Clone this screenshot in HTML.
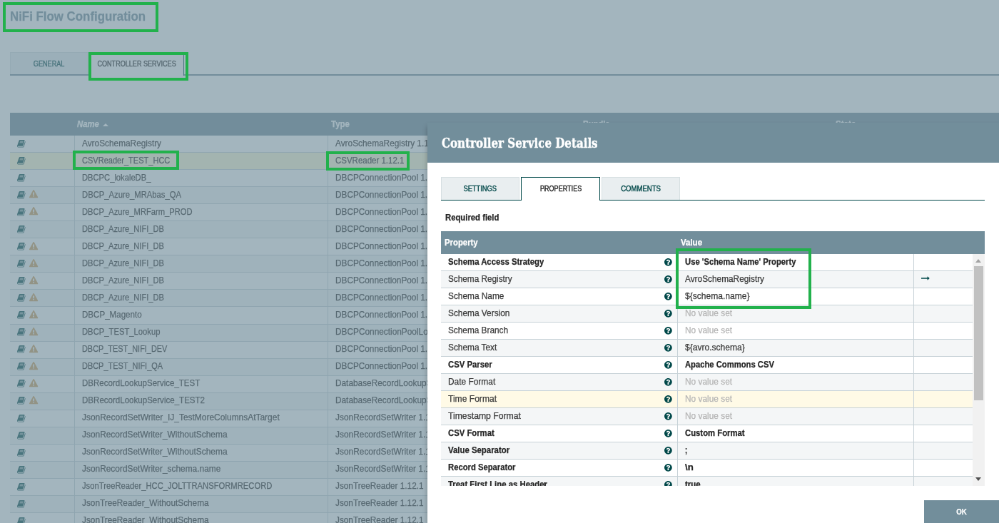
<!DOCTYPE html>
<html><head><meta charset="utf-8"><title>NiFi Flow Configuration</title><style>
html,body{margin:0;padding:0;}
body{width:999px;height:523px;overflow:hidden;background:#fff;font-family:"Liberation Sans",sans-serif;}
#stage{position:absolute;left:0;top:0;width:1400px;height:733px;transform:scale(0.713571);transform-origin:0 0;overflow:hidden;background:#fff;will-change:transform;color:#262626;font-size:12.5px;}
#stage *{box-sizing:border-box;}
.abs{position:absolute;}
.t{display:inline-block;white-space:nowrap;-webkit-text-stroke:0.25px currentColor;}
#title{left:14px;top:13.5px;font-size:18.5px;font-weight:bold;color:#728e9b;white-space:nowrap;line-height:1;}
.tabs{position:absolute;}
.tabs.bgt{height:33.2px;border-bottom:2px solid #728e9b;}
.tabs.dlt{height:32.6px;border-bottom:1px solid #004849;}
.tab{position:absolute;top:0;line-height:31px;text-align:center;font-size:10.3px;font-weight:400;white-space:nowrap;}
.bgt .tab{height:31.2px;}
.dlt .tab{height:31.6px;line-height:32.2px;}
.tab .t{-webkit-text-stroke-width:0.4px;}
.tab.un{background:#e9eef0;color:#004849;border:1px solid #d6dfe2;border-bottom:none;}
.tab.sel{background:#fff;color:#262626;border:1px solid #004849;border-bottom:none;}
.bgt .tab.sel{height:33.2px;}
.dlt .tab.sel{height:32.6px;}
.grid{position:absolute;overflow:hidden;}
.ghead{position:absolute;left:0;top:0;right:0;height:32px;background:#728e9b;color:#fff;font-weight:bold;line-height:32px;}
.ghead .hc{position:absolute;top:0;white-space:nowrap;}
.row{position:absolute;left:0;right:0;height:24px;line-height:22.6px;border-bottom:1px solid #c7d2d7;white-space:nowrap;background:#fff;}
.row.even{background:#f4f6f7;}
.row.selrow{background:#fffcd8;}
.row.hov{background:#fffae6;}
.cell{position:absolute;top:0;bottom:0;overflow:hidden;border-right:1px solid #c7d2d7;}
.bgrow .t{position:relative;top:-0.5px;}
svg.ic{position:absolute;display:block;overflow:visible;}
svg.book path{fill:#004849;}
svg.warn path{fill:#cf9f5d;}
svg.q path{fill:#004849;}
svg.arr path{fill:#004849;}
#glass{left:0;top:0;width:1400px;height:733px;background:rgba(114,142,155,0.65);}
#dialog{left:598.5px;top:171.7px;width:803.5px;height:600px;background:#fff;box-shadow:0 5px 7px rgba(0,0,0,.28);}
#dhead{left:0;top:0;right:0;height:56px;background:#728e9b;}
#dtitle{left:20px;top:19.5px;font-family:"DejaVu Serif","Liberation Serif",serif;font-weight:bold;font-size:19px;color:#fff;white-space:nowrap;line-height:1;}
.b{font-weight:bold;color:#262626;}
#dialog .row{color:#3a3a3a;}
.unset{color:#b4b4b4;}
.green{position:absolute;border:4.4px solid #22b14c;}
#ok{background:#728e9b;color:#fff;text-align:center;font-size:11.3px;font-weight:700;line-height:32px;height:40px;}
</style></head><body><div id="stage">
<div id="title" class="abs"><span class="t k-title" style="transform:scaleX(0.9114);transform-origin:0 50%;">NiFi Flow Configuration</span></div>
<div class="tabs bgt" style="left:13.7px;top:72.9px;width:1500px;"><div class="tab un" style="left:0;width:110.5px;"><span class="t k-tab" style="transform:scaleX(0.8845);transform-origin:50% 50%;">GENERAL</span></div><div class="tab sel" style="left:112.2px;width:131.9px;"><span class="t k-tab" style="transform:scaleX(0.8811);transform-origin:50% 50%;">CONTROLLER SERVICES</span></div></div>
<div class="grid" style="left:14px;top:157.6px;width:1391px;height:580.4px;">
<div class="ghead" style="height:32.5px;"><div class="hc" style="left:93.8px;font-style:italic;"><span class="t k-headi" style="transform:scaleX(0.9058);transform-origin:0 50%;">Name</span></div><div class="hc" style="left:130.4px;top:15.2px;width:0;height:0;border-left:4.2px solid transparent;border-right:4.2px solid transparent;border-bottom:4.6px solid #fff;"></div><div class="hc" style="left:450px;"><span class="t k-head" style="transform:scaleX(0.9150);transform-origin:0 50%;">Type</span></div><div class="hc" style="left:803px;"><span class="t k-head" style="transform:scaleX(0.8861);transform-origin:0 50%;">Bundle</span></div><div class="hc" style="left:1157px;"><span class="t k-head" style="transform:scaleX(0.9293);transform-origin:0 50%;">State</span></div></div>
<div class="row bgrow" style="top:32.50px;height:24.04px;"><div class="cell" style="left:0;width:91.2px;"><svg class="ic book" style="width:11.61px;height:12.50px;left:9.5px;top:4.8px;" viewBox="0 -1536 1664 1792"><path transform="scale(1,-1)" d="M1639 1058C1624 1078 1603 1092 1580 1101C1581 1083 1581 1063 1575 1044L1275 57C1264 21 1221 0 1184 0H261C206 0 137 12 117 70C109 92 110 101 118 113C127 125 143 128 156 128H1025C1152 128 1178 162 1225 316L1499 1222C1513 1269 1507 1316 1481 1352C1456 1387 1414 1408 1367 1408H606C589 1408 572 1403 555 1399L556 1402C429 1438 421 1301 379 1239C363 1216 339 1196 335 1177C332 1159 342 1142 340 1125C334 1072 294 977 270 944C255 924 233 914 226 891C220 875 230 852 228 831C223 784 188 695 161 649C151 631 132 617 127 598C122 581 132 559 127 540C116 488 82 407 52 357C36 330 15 313 11 289C9 277 18 264 17 248C16 224 12 204 10 184C-4 146 -4 102 12 57C49 -47 158 -128 260 -128H1183C1269 -128 1357 -62 1382 23L1657 929C1671 975 1664 1022 1639 1058ZM575 1056 596 1120C602 1138 621 1152 638 1152H1246C1264 1152 1274 1138 1268 1120L1247 1056C1241 1038 1222 1024 1205 1024H597C579 1024 569 1038 575 1056ZM492 800 513 864C519 882 538 896 555 896H1163C1181 896 1191 882 1185 864L1164 800C1158 782 1139 768 1122 768H514C496 768 486 782 492 800Z"/></svg></div><div class="cell" style="left:91.2px;width:354.8px;padding-left:10px;"><span class="t k-row" style="transform:scaleX(0.9477);transform-origin:0 50%;">AvroSchemaRegistry</span></div><div class="cell" style="left:446px;width:353px;padding-left:10px;"><span class="t k-row" style="transform:scaleX(0.9480);transform-origin:0 50%;">AvroSchemaRegistry 1.12.1</span></div><div class="cell" style="left:799px;width:354px;"></div></div>
<div class="row bgrow even selrow" style="top:56.54px;height:24.04px;"><div class="cell" style="left:0;width:91.2px;"><svg class="ic book" style="width:11.61px;height:12.50px;left:9.5px;top:4.8px;" viewBox="0 -1536 1664 1792"><path transform="scale(1,-1)" d="M1639 1058C1624 1078 1603 1092 1580 1101C1581 1083 1581 1063 1575 1044L1275 57C1264 21 1221 0 1184 0H261C206 0 137 12 117 70C109 92 110 101 118 113C127 125 143 128 156 128H1025C1152 128 1178 162 1225 316L1499 1222C1513 1269 1507 1316 1481 1352C1456 1387 1414 1408 1367 1408H606C589 1408 572 1403 555 1399L556 1402C429 1438 421 1301 379 1239C363 1216 339 1196 335 1177C332 1159 342 1142 340 1125C334 1072 294 977 270 944C255 924 233 914 226 891C220 875 230 852 228 831C223 784 188 695 161 649C151 631 132 617 127 598C122 581 132 559 127 540C116 488 82 407 52 357C36 330 15 313 11 289C9 277 18 264 17 248C16 224 12 204 10 184C-4 146 -4 102 12 57C49 -47 158 -128 260 -128H1183C1269 -128 1357 -62 1382 23L1657 929C1671 975 1664 1022 1639 1058ZM575 1056 596 1120C602 1138 621 1152 638 1152H1246C1264 1152 1274 1138 1268 1120L1247 1056C1241 1038 1222 1024 1205 1024H597C579 1024 569 1038 575 1056ZM492 800 513 864C519 882 538 896 555 896H1163C1181 896 1191 882 1185 864L1164 800C1158 782 1139 768 1122 768H514C496 768 486 782 492 800Z"/></svg></div><div class="cell" style="left:91.2px;width:354.8px;padding-left:10px;"><span class="t k-row" style="transform:scaleX(0.8833);transform-origin:0 50%;">CSVReader_TEST_HCC</span></div><div class="cell" style="left:446px;width:353px;padding-left:10px;"><span class="t k-row" style="transform:scaleX(0.9182);transform-origin:0 50%;">CSVReader 1.12.1</span></div><div class="cell" style="left:799px;width:354px;"></div></div>
<div class="row bgrow" style="top:80.58px;height:24.04px;"><div class="cell" style="left:0;width:91.2px;"><svg class="ic book" style="width:11.61px;height:12.50px;left:9.5px;top:4.8px;" viewBox="0 -1536 1664 1792"><path transform="scale(1,-1)" d="M1639 1058C1624 1078 1603 1092 1580 1101C1581 1083 1581 1063 1575 1044L1275 57C1264 21 1221 0 1184 0H261C206 0 137 12 117 70C109 92 110 101 118 113C127 125 143 128 156 128H1025C1152 128 1178 162 1225 316L1499 1222C1513 1269 1507 1316 1481 1352C1456 1387 1414 1408 1367 1408H606C589 1408 572 1403 555 1399L556 1402C429 1438 421 1301 379 1239C363 1216 339 1196 335 1177C332 1159 342 1142 340 1125C334 1072 294 977 270 944C255 924 233 914 226 891C220 875 230 852 228 831C223 784 188 695 161 649C151 631 132 617 127 598C122 581 132 559 127 540C116 488 82 407 52 357C36 330 15 313 11 289C9 277 18 264 17 248C16 224 12 204 10 184C-4 146 -4 102 12 57C49 -47 158 -128 260 -128H1183C1269 -128 1357 -62 1382 23L1657 929C1671 975 1664 1022 1639 1058ZM575 1056 596 1120C602 1138 621 1152 638 1152H1246C1264 1152 1274 1138 1268 1120L1247 1056C1241 1038 1222 1024 1205 1024H597C579 1024 569 1038 575 1056ZM492 800 513 864C519 882 538 896 555 896H1163C1181 896 1191 882 1185 864L1164 800C1158 782 1139 768 1122 768H514C496 768 486 782 492 800Z"/></svg></div><div class="cell" style="left:91.2px;width:354.8px;padding-left:10px;"><span class="t k-row" style="transform:scaleX(0.8950);transform-origin:0 50%;">DBCPC_lokaleDB_</span></div><div class="cell" style="left:446px;width:353px;padding-left:10px;"><span class="t k-row" style="transform:scaleX(0.9432);transform-origin:0 50%;">DBCPConnectionPool 1.12.1</span></div><div class="cell" style="left:799px;width:354px;"></div></div>
<div class="row bgrow even" style="top:104.62px;height:24.04px;"><div class="cell" style="left:0;width:91.2px;"><svg class="ic book" style="width:11.61px;height:12.50px;left:9.5px;top:4.8px;" viewBox="0 -1536 1664 1792"><path transform="scale(1,-1)" d="M1639 1058C1624 1078 1603 1092 1580 1101C1581 1083 1581 1063 1575 1044L1275 57C1264 21 1221 0 1184 0H261C206 0 137 12 117 70C109 92 110 101 118 113C127 125 143 128 156 128H1025C1152 128 1178 162 1225 316L1499 1222C1513 1269 1507 1316 1481 1352C1456 1387 1414 1408 1367 1408H606C589 1408 572 1403 555 1399L556 1402C429 1438 421 1301 379 1239C363 1216 339 1196 335 1177C332 1159 342 1142 340 1125C334 1072 294 977 270 944C255 924 233 914 226 891C220 875 230 852 228 831C223 784 188 695 161 649C151 631 132 617 127 598C122 581 132 559 127 540C116 488 82 407 52 357C36 330 15 313 11 289C9 277 18 264 17 248C16 224 12 204 10 184C-4 146 -4 102 12 57C49 -47 158 -128 260 -128H1183C1269 -128 1357 -62 1382 23L1657 929C1671 975 1664 1022 1639 1058ZM575 1056 596 1120C602 1138 621 1152 638 1152H1246C1264 1152 1274 1138 1268 1120L1247 1056C1241 1038 1222 1024 1205 1024H597C579 1024 569 1038 575 1056ZM492 800 513 864C519 882 538 896 555 896H1163C1181 896 1191 882 1185 864L1164 800C1158 782 1139 768 1122 768H514C496 768 486 782 492 800Z"/></svg><svg class="ic warn" style="width:12.20px;height:12.20px;left:26.799999999999997px;top:4.2px;" viewBox="0 -1536 1792 1792"><path transform="scale(1,-1)" d="M1024 161C1024 143 1010 128 992 128H800C782 128 768 143 768 161V351C768 369 782 384 800 384H992C1010 384 1024 369 1024 351V161ZM1022 535C1021 522 1006 512 988 512H803C784 512 769 522 769 535L752 992C752 998 755 1008 762 1013C768 1018 777 1024 786 1024H1006C1015 1024 1024 1018 1030 1013C1037 1008 1040 1000 1040 994ZM1008 1469C986 1510 943 1536 896 1536C849 1536 806 1510 784 1469L16 61C-6 22 -5 -26 18 -65C41 -104 83 -128 128 -128H1664C1709 -128 1751 -104 1774 -65C1797 -26 1798 22 1776 61Z"/></svg></div><div class="cell" style="left:91.2px;width:354.8px;padding-left:10px;"><span class="t k-row" style="transform:scaleX(0.9015);transform-origin:0 50%;">DBCP_Azure_MRAbas_QA</span></div><div class="cell" style="left:446px;width:353px;padding-left:10px;"><span class="t k-row" style="transform:scaleX(0.9432);transform-origin:0 50%;">DBCPConnectionPool 1.12.1</span></div><div class="cell" style="left:799px;width:354px;"></div></div>
<div class="row bgrow" style="top:128.66px;height:24.04px;"><div class="cell" style="left:0;width:91.2px;"><svg class="ic book" style="width:11.61px;height:12.50px;left:9.5px;top:4.8px;" viewBox="0 -1536 1664 1792"><path transform="scale(1,-1)" d="M1639 1058C1624 1078 1603 1092 1580 1101C1581 1083 1581 1063 1575 1044L1275 57C1264 21 1221 0 1184 0H261C206 0 137 12 117 70C109 92 110 101 118 113C127 125 143 128 156 128H1025C1152 128 1178 162 1225 316L1499 1222C1513 1269 1507 1316 1481 1352C1456 1387 1414 1408 1367 1408H606C589 1408 572 1403 555 1399L556 1402C429 1438 421 1301 379 1239C363 1216 339 1196 335 1177C332 1159 342 1142 340 1125C334 1072 294 977 270 944C255 924 233 914 226 891C220 875 230 852 228 831C223 784 188 695 161 649C151 631 132 617 127 598C122 581 132 559 127 540C116 488 82 407 52 357C36 330 15 313 11 289C9 277 18 264 17 248C16 224 12 204 10 184C-4 146 -4 102 12 57C49 -47 158 -128 260 -128H1183C1269 -128 1357 -62 1382 23L1657 929C1671 975 1664 1022 1639 1058ZM575 1056 596 1120C602 1138 621 1152 638 1152H1246C1264 1152 1274 1138 1268 1120L1247 1056C1241 1038 1222 1024 1205 1024H597C579 1024 569 1038 575 1056ZM492 800 513 864C519 882 538 896 555 896H1163C1181 896 1191 882 1185 864L1164 800C1158 782 1139 768 1122 768H514C496 768 486 782 492 800Z"/></svg><svg class="ic warn" style="width:12.20px;height:12.20px;left:26.799999999999997px;top:4.2px;" viewBox="0 -1536 1792 1792"><path transform="scale(1,-1)" d="M1024 161C1024 143 1010 128 992 128H800C782 128 768 143 768 161V351C768 369 782 384 800 384H992C1010 384 1024 369 1024 351V161ZM1022 535C1021 522 1006 512 988 512H803C784 512 769 522 769 535L752 992C752 998 755 1008 762 1013C768 1018 777 1024 786 1024H1006C1015 1024 1024 1018 1030 1013C1037 1008 1040 1000 1040 994ZM1008 1469C986 1510 943 1536 896 1536C849 1536 806 1510 784 1469L16 61C-6 22 -5 -26 18 -65C41 -104 83 -128 128 -128H1664C1709 -128 1751 -104 1774 -65C1797 -26 1798 22 1776 61Z"/></svg></div><div class="cell" style="left:91.2px;width:354.8px;padding-left:10px;"><span class="t k-row" style="transform:scaleX(0.8934);transform-origin:0 50%;">DBCP_Azure_MRFarm_PROD</span></div><div class="cell" style="left:446px;width:353px;padding-left:10px;"><span class="t k-row" style="transform:scaleX(0.9432);transform-origin:0 50%;">DBCPConnectionPool 1.12.1</span></div><div class="cell" style="left:799px;width:354px;"></div></div>
<div class="row bgrow even" style="top:152.70px;height:24.04px;"><div class="cell" style="left:0;width:91.2px;"><svg class="ic book" style="width:11.61px;height:12.50px;left:9.5px;top:4.8px;" viewBox="0 -1536 1664 1792"><path transform="scale(1,-1)" d="M1639 1058C1624 1078 1603 1092 1580 1101C1581 1083 1581 1063 1575 1044L1275 57C1264 21 1221 0 1184 0H261C206 0 137 12 117 70C109 92 110 101 118 113C127 125 143 128 156 128H1025C1152 128 1178 162 1225 316L1499 1222C1513 1269 1507 1316 1481 1352C1456 1387 1414 1408 1367 1408H606C589 1408 572 1403 555 1399L556 1402C429 1438 421 1301 379 1239C363 1216 339 1196 335 1177C332 1159 342 1142 340 1125C334 1072 294 977 270 944C255 924 233 914 226 891C220 875 230 852 228 831C223 784 188 695 161 649C151 631 132 617 127 598C122 581 132 559 127 540C116 488 82 407 52 357C36 330 15 313 11 289C9 277 18 264 17 248C16 224 12 204 10 184C-4 146 -4 102 12 57C49 -47 158 -128 260 -128H1183C1269 -128 1357 -62 1382 23L1657 929C1671 975 1664 1022 1639 1058ZM575 1056 596 1120C602 1138 621 1152 638 1152H1246C1264 1152 1274 1138 1268 1120L1247 1056C1241 1038 1222 1024 1205 1024H597C579 1024 569 1038 575 1056ZM492 800 513 864C519 882 538 896 555 896H1163C1181 896 1191 882 1185 864L1164 800C1158 782 1139 768 1122 768H514C496 768 486 782 492 800Z"/></svg></div><div class="cell" style="left:91.2px;width:354.8px;padding-left:10px;"><span class="t k-row" style="transform:scaleX(0.8890);transform-origin:0 50%;">DBCP_Azure_NIFI_DB</span></div><div class="cell" style="left:446px;width:353px;padding-left:10px;"><span class="t k-row" style="transform:scaleX(0.9432);transform-origin:0 50%;">DBCPConnectionPool 1.12.1</span></div><div class="cell" style="left:799px;width:354px;"></div></div>
<div class="row bgrow" style="top:176.74px;height:24.04px;"><div class="cell" style="left:0;width:91.2px;"><svg class="ic book" style="width:11.61px;height:12.50px;left:9.5px;top:4.8px;" viewBox="0 -1536 1664 1792"><path transform="scale(1,-1)" d="M1639 1058C1624 1078 1603 1092 1580 1101C1581 1083 1581 1063 1575 1044L1275 57C1264 21 1221 0 1184 0H261C206 0 137 12 117 70C109 92 110 101 118 113C127 125 143 128 156 128H1025C1152 128 1178 162 1225 316L1499 1222C1513 1269 1507 1316 1481 1352C1456 1387 1414 1408 1367 1408H606C589 1408 572 1403 555 1399L556 1402C429 1438 421 1301 379 1239C363 1216 339 1196 335 1177C332 1159 342 1142 340 1125C334 1072 294 977 270 944C255 924 233 914 226 891C220 875 230 852 228 831C223 784 188 695 161 649C151 631 132 617 127 598C122 581 132 559 127 540C116 488 82 407 52 357C36 330 15 313 11 289C9 277 18 264 17 248C16 224 12 204 10 184C-4 146 -4 102 12 57C49 -47 158 -128 260 -128H1183C1269 -128 1357 -62 1382 23L1657 929C1671 975 1664 1022 1639 1058ZM575 1056 596 1120C602 1138 621 1152 638 1152H1246C1264 1152 1274 1138 1268 1120L1247 1056C1241 1038 1222 1024 1205 1024H597C579 1024 569 1038 575 1056ZM492 800 513 864C519 882 538 896 555 896H1163C1181 896 1191 882 1185 864L1164 800C1158 782 1139 768 1122 768H514C496 768 486 782 492 800Z"/></svg><svg class="ic warn" style="width:12.20px;height:12.20px;left:26.799999999999997px;top:4.2px;" viewBox="0 -1536 1792 1792"><path transform="scale(1,-1)" d="M1024 161C1024 143 1010 128 992 128H800C782 128 768 143 768 161V351C768 369 782 384 800 384H992C1010 384 1024 369 1024 351V161ZM1022 535C1021 522 1006 512 988 512H803C784 512 769 522 769 535L752 992C752 998 755 1008 762 1013C768 1018 777 1024 786 1024H1006C1015 1024 1024 1018 1030 1013C1037 1008 1040 1000 1040 994ZM1008 1469C986 1510 943 1536 896 1536C849 1536 806 1510 784 1469L16 61C-6 22 -5 -26 18 -65C41 -104 83 -128 128 -128H1664C1709 -128 1751 -104 1774 -65C1797 -26 1798 22 1776 61Z"/></svg></div><div class="cell" style="left:91.2px;width:354.8px;padding-left:10px;"><span class="t k-row" style="transform:scaleX(0.8890);transform-origin:0 50%;">DBCP_Azure_NIFI_DB</span></div><div class="cell" style="left:446px;width:353px;padding-left:10px;"><span class="t k-row" style="transform:scaleX(0.9432);transform-origin:0 50%;">DBCPConnectionPool 1.12.1</span></div><div class="cell" style="left:799px;width:354px;"></div></div>
<div class="row bgrow even" style="top:200.78px;height:24.04px;"><div class="cell" style="left:0;width:91.2px;"><svg class="ic book" style="width:11.61px;height:12.50px;left:9.5px;top:4.8px;" viewBox="0 -1536 1664 1792"><path transform="scale(1,-1)" d="M1639 1058C1624 1078 1603 1092 1580 1101C1581 1083 1581 1063 1575 1044L1275 57C1264 21 1221 0 1184 0H261C206 0 137 12 117 70C109 92 110 101 118 113C127 125 143 128 156 128H1025C1152 128 1178 162 1225 316L1499 1222C1513 1269 1507 1316 1481 1352C1456 1387 1414 1408 1367 1408H606C589 1408 572 1403 555 1399L556 1402C429 1438 421 1301 379 1239C363 1216 339 1196 335 1177C332 1159 342 1142 340 1125C334 1072 294 977 270 944C255 924 233 914 226 891C220 875 230 852 228 831C223 784 188 695 161 649C151 631 132 617 127 598C122 581 132 559 127 540C116 488 82 407 52 357C36 330 15 313 11 289C9 277 18 264 17 248C16 224 12 204 10 184C-4 146 -4 102 12 57C49 -47 158 -128 260 -128H1183C1269 -128 1357 -62 1382 23L1657 929C1671 975 1664 1022 1639 1058ZM575 1056 596 1120C602 1138 621 1152 638 1152H1246C1264 1152 1274 1138 1268 1120L1247 1056C1241 1038 1222 1024 1205 1024H597C579 1024 569 1038 575 1056ZM492 800 513 864C519 882 538 896 555 896H1163C1181 896 1191 882 1185 864L1164 800C1158 782 1139 768 1122 768H514C496 768 486 782 492 800Z"/></svg><svg class="ic warn" style="width:12.20px;height:12.20px;left:26.799999999999997px;top:4.2px;" viewBox="0 -1536 1792 1792"><path transform="scale(1,-1)" d="M1024 161C1024 143 1010 128 992 128H800C782 128 768 143 768 161V351C768 369 782 384 800 384H992C1010 384 1024 369 1024 351V161ZM1022 535C1021 522 1006 512 988 512H803C784 512 769 522 769 535L752 992C752 998 755 1008 762 1013C768 1018 777 1024 786 1024H1006C1015 1024 1024 1018 1030 1013C1037 1008 1040 1000 1040 994ZM1008 1469C986 1510 943 1536 896 1536C849 1536 806 1510 784 1469L16 61C-6 22 -5 -26 18 -65C41 -104 83 -128 128 -128H1664C1709 -128 1751 -104 1774 -65C1797 -26 1798 22 1776 61Z"/></svg></div><div class="cell" style="left:91.2px;width:354.8px;padding-left:10px;"><span class="t k-row" style="transform:scaleX(0.8890);transform-origin:0 50%;">DBCP_Azure_NIFI_DB</span></div><div class="cell" style="left:446px;width:353px;padding-left:10px;"><span class="t k-row" style="transform:scaleX(0.9432);transform-origin:0 50%;">DBCPConnectionPool 1.12.1</span></div><div class="cell" style="left:799px;width:354px;"></div></div>
<div class="row bgrow" style="top:224.82px;height:24.04px;"><div class="cell" style="left:0;width:91.2px;"><svg class="ic book" style="width:11.61px;height:12.50px;left:9.5px;top:4.8px;" viewBox="0 -1536 1664 1792"><path transform="scale(1,-1)" d="M1639 1058C1624 1078 1603 1092 1580 1101C1581 1083 1581 1063 1575 1044L1275 57C1264 21 1221 0 1184 0H261C206 0 137 12 117 70C109 92 110 101 118 113C127 125 143 128 156 128H1025C1152 128 1178 162 1225 316L1499 1222C1513 1269 1507 1316 1481 1352C1456 1387 1414 1408 1367 1408H606C589 1408 572 1403 555 1399L556 1402C429 1438 421 1301 379 1239C363 1216 339 1196 335 1177C332 1159 342 1142 340 1125C334 1072 294 977 270 944C255 924 233 914 226 891C220 875 230 852 228 831C223 784 188 695 161 649C151 631 132 617 127 598C122 581 132 559 127 540C116 488 82 407 52 357C36 330 15 313 11 289C9 277 18 264 17 248C16 224 12 204 10 184C-4 146 -4 102 12 57C49 -47 158 -128 260 -128H1183C1269 -128 1357 -62 1382 23L1657 929C1671 975 1664 1022 1639 1058ZM575 1056 596 1120C602 1138 621 1152 638 1152H1246C1264 1152 1274 1138 1268 1120L1247 1056C1241 1038 1222 1024 1205 1024H597C579 1024 569 1038 575 1056ZM492 800 513 864C519 882 538 896 555 896H1163C1181 896 1191 882 1185 864L1164 800C1158 782 1139 768 1122 768H514C496 768 486 782 492 800Z"/></svg><svg class="ic warn" style="width:12.20px;height:12.20px;left:26.799999999999997px;top:4.2px;" viewBox="0 -1536 1792 1792"><path transform="scale(1,-1)" d="M1024 161C1024 143 1010 128 992 128H800C782 128 768 143 768 161V351C768 369 782 384 800 384H992C1010 384 1024 369 1024 351V161ZM1022 535C1021 522 1006 512 988 512H803C784 512 769 522 769 535L752 992C752 998 755 1008 762 1013C768 1018 777 1024 786 1024H1006C1015 1024 1024 1018 1030 1013C1037 1008 1040 1000 1040 994ZM1008 1469C986 1510 943 1536 896 1536C849 1536 806 1510 784 1469L16 61C-6 22 -5 -26 18 -65C41 -104 83 -128 128 -128H1664C1709 -128 1751 -104 1774 -65C1797 -26 1798 22 1776 61Z"/></svg></div><div class="cell" style="left:91.2px;width:354.8px;padding-left:10px;"><span class="t k-row" style="transform:scaleX(0.8890);transform-origin:0 50%;">DBCP_Azure_NIFI_DB</span></div><div class="cell" style="left:446px;width:353px;padding-left:10px;"><span class="t k-row" style="transform:scaleX(0.9432);transform-origin:0 50%;">DBCPConnectionPool 1.12.1</span></div><div class="cell" style="left:799px;width:354px;"></div></div>
<div class="row bgrow even" style="top:248.86px;height:24.04px;"><div class="cell" style="left:0;width:91.2px;"><svg class="ic book" style="width:11.61px;height:12.50px;left:9.5px;top:4.8px;" viewBox="0 -1536 1664 1792"><path transform="scale(1,-1)" d="M1639 1058C1624 1078 1603 1092 1580 1101C1581 1083 1581 1063 1575 1044L1275 57C1264 21 1221 0 1184 0H261C206 0 137 12 117 70C109 92 110 101 118 113C127 125 143 128 156 128H1025C1152 128 1178 162 1225 316L1499 1222C1513 1269 1507 1316 1481 1352C1456 1387 1414 1408 1367 1408H606C589 1408 572 1403 555 1399L556 1402C429 1438 421 1301 379 1239C363 1216 339 1196 335 1177C332 1159 342 1142 340 1125C334 1072 294 977 270 944C255 924 233 914 226 891C220 875 230 852 228 831C223 784 188 695 161 649C151 631 132 617 127 598C122 581 132 559 127 540C116 488 82 407 52 357C36 330 15 313 11 289C9 277 18 264 17 248C16 224 12 204 10 184C-4 146 -4 102 12 57C49 -47 158 -128 260 -128H1183C1269 -128 1357 -62 1382 23L1657 929C1671 975 1664 1022 1639 1058ZM575 1056 596 1120C602 1138 621 1152 638 1152H1246C1264 1152 1274 1138 1268 1120L1247 1056C1241 1038 1222 1024 1205 1024H597C579 1024 569 1038 575 1056ZM492 800 513 864C519 882 538 896 555 896H1163C1181 896 1191 882 1185 864L1164 800C1158 782 1139 768 1122 768H514C496 768 486 782 492 800Z"/></svg><svg class="ic warn" style="width:12.20px;height:12.20px;left:26.799999999999997px;top:4.2px;" viewBox="0 -1536 1792 1792"><path transform="scale(1,-1)" d="M1024 161C1024 143 1010 128 992 128H800C782 128 768 143 768 161V351C768 369 782 384 800 384H992C1010 384 1024 369 1024 351V161ZM1022 535C1021 522 1006 512 988 512H803C784 512 769 522 769 535L752 992C752 998 755 1008 762 1013C768 1018 777 1024 786 1024H1006C1015 1024 1024 1018 1030 1013C1037 1008 1040 1000 1040 994ZM1008 1469C986 1510 943 1536 896 1536C849 1536 806 1510 784 1469L16 61C-6 22 -5 -26 18 -65C41 -104 83 -128 128 -128H1664C1709 -128 1751 -104 1774 -65C1797 -26 1798 22 1776 61Z"/></svg></div><div class="cell" style="left:91.2px;width:354.8px;padding-left:10px;"><span class="t k-row" style="transform:scaleX(0.8890);transform-origin:0 50%;">DBCP_Azure_NIFI_DB</span></div><div class="cell" style="left:446px;width:353px;padding-left:10px;"><span class="t k-row" style="transform:scaleX(0.9432);transform-origin:0 50%;">DBCPConnectionPool 1.12.1</span></div><div class="cell" style="left:799px;width:354px;"></div></div>
<div class="row bgrow" style="top:272.90px;height:24.04px;"><div class="cell" style="left:0;width:91.2px;"><svg class="ic book" style="width:11.61px;height:12.50px;left:9.5px;top:4.8px;" viewBox="0 -1536 1664 1792"><path transform="scale(1,-1)" d="M1639 1058C1624 1078 1603 1092 1580 1101C1581 1083 1581 1063 1575 1044L1275 57C1264 21 1221 0 1184 0H261C206 0 137 12 117 70C109 92 110 101 118 113C127 125 143 128 156 128H1025C1152 128 1178 162 1225 316L1499 1222C1513 1269 1507 1316 1481 1352C1456 1387 1414 1408 1367 1408H606C589 1408 572 1403 555 1399L556 1402C429 1438 421 1301 379 1239C363 1216 339 1196 335 1177C332 1159 342 1142 340 1125C334 1072 294 977 270 944C255 924 233 914 226 891C220 875 230 852 228 831C223 784 188 695 161 649C151 631 132 617 127 598C122 581 132 559 127 540C116 488 82 407 52 357C36 330 15 313 11 289C9 277 18 264 17 248C16 224 12 204 10 184C-4 146 -4 102 12 57C49 -47 158 -128 260 -128H1183C1269 -128 1357 -62 1382 23L1657 929C1671 975 1664 1022 1639 1058ZM575 1056 596 1120C602 1138 621 1152 638 1152H1246C1264 1152 1274 1138 1268 1120L1247 1056C1241 1038 1222 1024 1205 1024H597C579 1024 569 1038 575 1056ZM492 800 513 864C519 882 538 896 555 896H1163C1181 896 1191 882 1185 864L1164 800C1158 782 1139 768 1122 768H514C496 768 486 782 492 800Z"/></svg><svg class="ic warn" style="width:12.20px;height:12.20px;left:26.799999999999997px;top:4.2px;" viewBox="0 -1536 1792 1792"><path transform="scale(1,-1)" d="M1024 161C1024 143 1010 128 992 128H800C782 128 768 143 768 161V351C768 369 782 384 800 384H992C1010 384 1024 369 1024 351V161ZM1022 535C1021 522 1006 512 988 512H803C784 512 769 522 769 535L752 992C752 998 755 1008 762 1013C768 1018 777 1024 786 1024H1006C1015 1024 1024 1018 1030 1013C1037 1008 1040 1000 1040 994ZM1008 1469C986 1510 943 1536 896 1536C849 1536 806 1510 784 1469L16 61C-6 22 -5 -26 18 -65C41 -104 83 -128 128 -128H1664C1709 -128 1751 -104 1774 -65C1797 -26 1798 22 1776 61Z"/></svg></div><div class="cell" style="left:91.2px;width:354.8px;padding-left:10px;"><span class="t k-row" style="transform:scaleX(0.9261);transform-origin:0 50%;">DBCP_Magento</span></div><div class="cell" style="left:446px;width:353px;padding-left:10px;"><span class="t k-row" style="transform:scaleX(0.9432);transform-origin:0 50%;">DBCPConnectionPool 1.12.1</span></div><div class="cell" style="left:799px;width:354px;"></div></div>
<div class="row bgrow even" style="top:296.94px;height:24.04px;"><div class="cell" style="left:0;width:91.2px;"><svg class="ic book" style="width:11.61px;height:12.50px;left:9.5px;top:4.8px;" viewBox="0 -1536 1664 1792"><path transform="scale(1,-1)" d="M1639 1058C1624 1078 1603 1092 1580 1101C1581 1083 1581 1063 1575 1044L1275 57C1264 21 1221 0 1184 0H261C206 0 137 12 117 70C109 92 110 101 118 113C127 125 143 128 156 128H1025C1152 128 1178 162 1225 316L1499 1222C1513 1269 1507 1316 1481 1352C1456 1387 1414 1408 1367 1408H606C589 1408 572 1403 555 1399L556 1402C429 1438 421 1301 379 1239C363 1216 339 1196 335 1177C332 1159 342 1142 340 1125C334 1072 294 977 270 944C255 924 233 914 226 891C220 875 230 852 228 831C223 784 188 695 161 649C151 631 132 617 127 598C122 581 132 559 127 540C116 488 82 407 52 357C36 330 15 313 11 289C9 277 18 264 17 248C16 224 12 204 10 184C-4 146 -4 102 12 57C49 -47 158 -128 260 -128H1183C1269 -128 1357 -62 1382 23L1657 929C1671 975 1664 1022 1639 1058ZM575 1056 596 1120C602 1138 621 1152 638 1152H1246C1264 1152 1274 1138 1268 1120L1247 1056C1241 1038 1222 1024 1205 1024H597C579 1024 569 1038 575 1056ZM492 800 513 864C519 882 538 896 555 896H1163C1181 896 1191 882 1185 864L1164 800C1158 782 1139 768 1122 768H514C496 768 486 782 492 800Z"/></svg><svg class="ic warn" style="width:12.20px;height:12.20px;left:26.799999999999997px;top:4.2px;" viewBox="0 -1536 1792 1792"><path transform="scale(1,-1)" d="M1024 161C1024 143 1010 128 992 128H800C782 128 768 143 768 161V351C768 369 782 384 800 384H992C1010 384 1024 369 1024 351V161ZM1022 535C1021 522 1006 512 988 512H803C784 512 769 522 769 535L752 992C752 998 755 1008 762 1013C768 1018 777 1024 786 1024H1006C1015 1024 1024 1018 1030 1013C1037 1008 1040 1000 1040 994ZM1008 1469C986 1510 943 1536 896 1536C849 1536 806 1510 784 1469L16 61C-6 22 -5 -26 18 -65C41 -104 83 -128 128 -128H1664C1709 -128 1751 -104 1774 -65C1797 -26 1798 22 1776 61Z"/></svg></div><div class="cell" style="left:91.2px;width:354.8px;padding-left:10px;"><span class="t k-row" style="transform:scaleX(0.8999);transform-origin:0 50%;">DBCP_TEST_Lookup</span></div><div class="cell" style="left:446px;width:353px;padding-left:10px;"><span class="t k-row" style="transform:scaleX(0.9477);transform-origin:0 50%;">DBCPConnectionPoolLookup 1.12.1</span></div><div class="cell" style="left:799px;width:354px;"></div></div>
<div class="row bgrow" style="top:320.98px;height:24.04px;"><div class="cell" style="left:0;width:91.2px;"><svg class="ic book" style="width:11.61px;height:12.50px;left:9.5px;top:4.8px;" viewBox="0 -1536 1664 1792"><path transform="scale(1,-1)" d="M1639 1058C1624 1078 1603 1092 1580 1101C1581 1083 1581 1063 1575 1044L1275 57C1264 21 1221 0 1184 0H261C206 0 137 12 117 70C109 92 110 101 118 113C127 125 143 128 156 128H1025C1152 128 1178 162 1225 316L1499 1222C1513 1269 1507 1316 1481 1352C1456 1387 1414 1408 1367 1408H606C589 1408 572 1403 555 1399L556 1402C429 1438 421 1301 379 1239C363 1216 339 1196 335 1177C332 1159 342 1142 340 1125C334 1072 294 977 270 944C255 924 233 914 226 891C220 875 230 852 228 831C223 784 188 695 161 649C151 631 132 617 127 598C122 581 132 559 127 540C116 488 82 407 52 357C36 330 15 313 11 289C9 277 18 264 17 248C16 224 12 204 10 184C-4 146 -4 102 12 57C49 -47 158 -128 260 -128H1183C1269 -128 1357 -62 1382 23L1657 929C1671 975 1664 1022 1639 1058ZM575 1056 596 1120C602 1138 621 1152 638 1152H1246C1264 1152 1274 1138 1268 1120L1247 1056C1241 1038 1222 1024 1205 1024H597C579 1024 569 1038 575 1056ZM492 800 513 864C519 882 538 896 555 896H1163C1181 896 1191 882 1185 864L1164 800C1158 782 1139 768 1122 768H514C496 768 486 782 492 800Z"/></svg><svg class="ic warn" style="width:12.20px;height:12.20px;left:26.799999999999997px;top:4.2px;" viewBox="0 -1536 1792 1792"><path transform="scale(1,-1)" d="M1024 161C1024 143 1010 128 992 128H800C782 128 768 143 768 161V351C768 369 782 384 800 384H992C1010 384 1024 369 1024 351V161ZM1022 535C1021 522 1006 512 988 512H803C784 512 769 522 769 535L752 992C752 998 755 1008 762 1013C768 1018 777 1024 786 1024H1006C1015 1024 1024 1018 1030 1013C1037 1008 1040 1000 1040 994ZM1008 1469C986 1510 943 1536 896 1536C849 1536 806 1510 784 1469L16 61C-6 22 -5 -26 18 -65C41 -104 83 -128 128 -128H1664C1709 -128 1751 -104 1774 -65C1797 -26 1798 22 1776 61Z"/></svg></div><div class="cell" style="left:91.2px;width:354.8px;padding-left:10px;"><span class="t k-row" style="transform:scaleX(0.8718);transform-origin:0 50%;">DBCP_TEST_NIFI_DEV</span></div><div class="cell" style="left:446px;width:353px;padding-left:10px;"><span class="t k-row" style="transform:scaleX(0.9432);transform-origin:0 50%;">DBCPConnectionPool 1.12.1</span></div><div class="cell" style="left:799px;width:354px;"></div></div>
<div class="row bgrow even" style="top:345.02px;height:24.04px;"><div class="cell" style="left:0;width:91.2px;"><svg class="ic book" style="width:11.61px;height:12.50px;left:9.5px;top:4.8px;" viewBox="0 -1536 1664 1792"><path transform="scale(1,-1)" d="M1639 1058C1624 1078 1603 1092 1580 1101C1581 1083 1581 1063 1575 1044L1275 57C1264 21 1221 0 1184 0H261C206 0 137 12 117 70C109 92 110 101 118 113C127 125 143 128 156 128H1025C1152 128 1178 162 1225 316L1499 1222C1513 1269 1507 1316 1481 1352C1456 1387 1414 1408 1367 1408H606C589 1408 572 1403 555 1399L556 1402C429 1438 421 1301 379 1239C363 1216 339 1196 335 1177C332 1159 342 1142 340 1125C334 1072 294 977 270 944C255 924 233 914 226 891C220 875 230 852 228 831C223 784 188 695 161 649C151 631 132 617 127 598C122 581 132 559 127 540C116 488 82 407 52 357C36 330 15 313 11 289C9 277 18 264 17 248C16 224 12 204 10 184C-4 146 -4 102 12 57C49 -47 158 -128 260 -128H1183C1269 -128 1357 -62 1382 23L1657 929C1671 975 1664 1022 1639 1058ZM575 1056 596 1120C602 1138 621 1152 638 1152H1246C1264 1152 1274 1138 1268 1120L1247 1056C1241 1038 1222 1024 1205 1024H597C579 1024 569 1038 575 1056ZM492 800 513 864C519 882 538 896 555 896H1163C1181 896 1191 882 1185 864L1164 800C1158 782 1139 768 1122 768H514C496 768 486 782 492 800Z"/></svg><svg class="ic warn" style="width:12.20px;height:12.20px;left:26.799999999999997px;top:4.2px;" viewBox="0 -1536 1792 1792"><path transform="scale(1,-1)" d="M1024 161C1024 143 1010 128 992 128H800C782 128 768 143 768 161V351C768 369 782 384 800 384H992C1010 384 1024 369 1024 351V161ZM1022 535C1021 522 1006 512 988 512H803C784 512 769 522 769 535L752 992C752 998 755 1008 762 1013C768 1018 777 1024 786 1024H1006C1015 1024 1024 1018 1030 1013C1037 1008 1040 1000 1040 994ZM1008 1469C986 1510 943 1536 896 1536C849 1536 806 1510 784 1469L16 61C-6 22 -5 -26 18 -65C41 -104 83 -128 128 -128H1664C1709 -128 1751 -104 1774 -65C1797 -26 1798 22 1776 61Z"/></svg></div><div class="cell" style="left:91.2px;width:354.8px;padding-left:10px;"><span class="t k-row" style="transform:scaleX(0.8750);transform-origin:0 50%;">DBCP_TEST_NIFI_QA</span></div><div class="cell" style="left:446px;width:353px;padding-left:10px;"><span class="t k-row" style="transform:scaleX(0.9432);transform-origin:0 50%;">DBCPConnectionPool 1.12.1</span></div><div class="cell" style="left:799px;width:354px;"></div></div>
<div class="row bgrow" style="top:369.06px;height:24.04px;"><div class="cell" style="left:0;width:91.2px;"><svg class="ic book" style="width:11.61px;height:12.50px;left:9.5px;top:4.8px;" viewBox="0 -1536 1664 1792"><path transform="scale(1,-1)" d="M1639 1058C1624 1078 1603 1092 1580 1101C1581 1083 1581 1063 1575 1044L1275 57C1264 21 1221 0 1184 0H261C206 0 137 12 117 70C109 92 110 101 118 113C127 125 143 128 156 128H1025C1152 128 1178 162 1225 316L1499 1222C1513 1269 1507 1316 1481 1352C1456 1387 1414 1408 1367 1408H606C589 1408 572 1403 555 1399L556 1402C429 1438 421 1301 379 1239C363 1216 339 1196 335 1177C332 1159 342 1142 340 1125C334 1072 294 977 270 944C255 924 233 914 226 891C220 875 230 852 228 831C223 784 188 695 161 649C151 631 132 617 127 598C122 581 132 559 127 540C116 488 82 407 52 357C36 330 15 313 11 289C9 277 18 264 17 248C16 224 12 204 10 184C-4 146 -4 102 12 57C49 -47 158 -128 260 -128H1183C1269 -128 1357 -62 1382 23L1657 929C1671 975 1664 1022 1639 1058ZM575 1056 596 1120C602 1138 621 1152 638 1152H1246C1264 1152 1274 1138 1268 1120L1247 1056C1241 1038 1222 1024 1205 1024H597C579 1024 569 1038 575 1056ZM492 800 513 864C519 882 538 896 555 896H1163C1181 896 1191 882 1185 864L1164 800C1158 782 1139 768 1122 768H514C496 768 486 782 492 800Z"/></svg><svg class="ic warn" style="width:12.20px;height:12.20px;left:26.799999999999997px;top:4.2px;" viewBox="0 -1536 1792 1792"><path transform="scale(1,-1)" d="M1024 161C1024 143 1010 128 992 128H800C782 128 768 143 768 161V351C768 369 782 384 800 384H992C1010 384 1024 369 1024 351V161ZM1022 535C1021 522 1006 512 988 512H803C784 512 769 522 769 535L752 992C752 998 755 1008 762 1013C768 1018 777 1024 786 1024H1006C1015 1024 1024 1018 1030 1013C1037 1008 1040 1000 1040 994ZM1008 1469C986 1510 943 1536 896 1536C849 1536 806 1510 784 1469L16 61C-6 22 -5 -26 18 -65C41 -104 83 -128 128 -128H1664C1709 -128 1751 -104 1774 -65C1797 -26 1798 22 1776 61Z"/></svg></div><div class="cell" style="left:91.2px;width:354.8px;padding-left:10px;"><span class="t k-row" style="transform:scaleX(0.9220);transform-origin:0 50%;">DBRecordLookupService_TEST</span></div><div class="cell" style="left:446px;width:353px;padding-left:10px;"><span class="t k-row" style="transform:scaleX(0.9463);transform-origin:0 50%;">DatabaseRecordLookupService 1.12.1</span></div><div class="cell" style="left:799px;width:354px;"></div></div>
<div class="row bgrow even" style="top:393.10px;height:24.04px;"><div class="cell" style="left:0;width:91.2px;"><svg class="ic book" style="width:11.61px;height:12.50px;left:9.5px;top:4.8px;" viewBox="0 -1536 1664 1792"><path transform="scale(1,-1)" d="M1639 1058C1624 1078 1603 1092 1580 1101C1581 1083 1581 1063 1575 1044L1275 57C1264 21 1221 0 1184 0H261C206 0 137 12 117 70C109 92 110 101 118 113C127 125 143 128 156 128H1025C1152 128 1178 162 1225 316L1499 1222C1513 1269 1507 1316 1481 1352C1456 1387 1414 1408 1367 1408H606C589 1408 572 1403 555 1399L556 1402C429 1438 421 1301 379 1239C363 1216 339 1196 335 1177C332 1159 342 1142 340 1125C334 1072 294 977 270 944C255 924 233 914 226 891C220 875 230 852 228 831C223 784 188 695 161 649C151 631 132 617 127 598C122 581 132 559 127 540C116 488 82 407 52 357C36 330 15 313 11 289C9 277 18 264 17 248C16 224 12 204 10 184C-4 146 -4 102 12 57C49 -47 158 -128 260 -128H1183C1269 -128 1357 -62 1382 23L1657 929C1671 975 1664 1022 1639 1058ZM575 1056 596 1120C602 1138 621 1152 638 1152H1246C1264 1152 1274 1138 1268 1120L1247 1056C1241 1038 1222 1024 1205 1024H597C579 1024 569 1038 575 1056ZM492 800 513 864C519 882 538 896 555 896H1163C1181 896 1191 882 1185 864L1164 800C1158 782 1139 768 1122 768H514C496 768 486 782 492 800Z"/></svg><svg class="ic warn" style="width:12.20px;height:12.20px;left:26.799999999999997px;top:4.2px;" viewBox="0 -1536 1792 1792"><path transform="scale(1,-1)" d="M1024 161C1024 143 1010 128 992 128H800C782 128 768 143 768 161V351C768 369 782 384 800 384H992C1010 384 1024 369 1024 351V161ZM1022 535C1021 522 1006 512 988 512H803C784 512 769 522 769 535L752 992C752 998 755 1008 762 1013C768 1018 777 1024 786 1024H1006C1015 1024 1024 1018 1030 1013C1037 1008 1040 1000 1040 994ZM1008 1469C986 1510 943 1536 896 1536C849 1536 806 1510 784 1469L16 61C-6 22 -5 -26 18 -65C41 -104 83 -128 128 -128H1664C1709 -128 1751 -104 1774 -65C1797 -26 1798 22 1776 61Z"/></svg></div><div class="cell" style="left:91.2px;width:354.8px;padding-left:10px;"><span class="t k-row" style="transform:scaleX(0.9238);transform-origin:0 50%;">DBRecordLookupService_TEST2</span></div><div class="cell" style="left:446px;width:353px;padding-left:10px;"><span class="t k-row" style="transform:scaleX(0.9463);transform-origin:0 50%;">DatabaseRecordLookupService 1.12.1</span></div><div class="cell" style="left:799px;width:354px;"></div></div>
<div class="row bgrow" style="top:417.14px;height:24.04px;"><div class="cell" style="left:0;width:91.2px;"><svg class="ic book" style="width:11.61px;height:12.50px;left:9.5px;top:4.8px;" viewBox="0 -1536 1664 1792"><path transform="scale(1,-1)" d="M1639 1058C1624 1078 1603 1092 1580 1101C1581 1083 1581 1063 1575 1044L1275 57C1264 21 1221 0 1184 0H261C206 0 137 12 117 70C109 92 110 101 118 113C127 125 143 128 156 128H1025C1152 128 1178 162 1225 316L1499 1222C1513 1269 1507 1316 1481 1352C1456 1387 1414 1408 1367 1408H606C589 1408 572 1403 555 1399L556 1402C429 1438 421 1301 379 1239C363 1216 339 1196 335 1177C332 1159 342 1142 340 1125C334 1072 294 977 270 944C255 924 233 914 226 891C220 875 230 852 228 831C223 784 188 695 161 649C151 631 132 617 127 598C122 581 132 559 127 540C116 488 82 407 52 357C36 330 15 313 11 289C9 277 18 264 17 248C16 224 12 204 10 184C-4 146 -4 102 12 57C49 -47 158 -128 260 -128H1183C1269 -128 1357 -62 1382 23L1657 929C1671 975 1664 1022 1639 1058ZM575 1056 596 1120C602 1138 621 1152 638 1152H1246C1264 1152 1274 1138 1268 1120L1247 1056C1241 1038 1222 1024 1205 1024H597C579 1024 569 1038 575 1056ZM492 800 513 864C519 882 538 896 555 896H1163C1181 896 1191 882 1185 864L1164 800C1158 782 1139 768 1122 768H514C496 768 486 782 492 800Z"/></svg></div><div class="cell" style="left:91.2px;width:354.8px;padding-left:10px;"><span class="t k-row" style="transform:scaleX(0.9559);transform-origin:0 50%;">JsonRecordSetWriter_IJ_TestMoreColumnsAtTarget</span></div><div class="cell" style="left:446px;width:353px;padding-left:10px;"><span class="t k-row" style="transform:scaleX(0.9533);transform-origin:0 50%;">JsonRecordSetWriter 1.12.1</span></div><div class="cell" style="left:799px;width:354px;"></div></div>
<div class="row bgrow even" style="top:441.18px;height:24.04px;"><div class="cell" style="left:0;width:91.2px;"><svg class="ic book" style="width:11.61px;height:12.50px;left:9.5px;top:4.8px;" viewBox="0 -1536 1664 1792"><path transform="scale(1,-1)" d="M1639 1058C1624 1078 1603 1092 1580 1101C1581 1083 1581 1063 1575 1044L1275 57C1264 21 1221 0 1184 0H261C206 0 137 12 117 70C109 92 110 101 118 113C127 125 143 128 156 128H1025C1152 128 1178 162 1225 316L1499 1222C1513 1269 1507 1316 1481 1352C1456 1387 1414 1408 1367 1408H606C589 1408 572 1403 555 1399L556 1402C429 1438 421 1301 379 1239C363 1216 339 1196 335 1177C332 1159 342 1142 340 1125C334 1072 294 977 270 944C255 924 233 914 226 891C220 875 230 852 228 831C223 784 188 695 161 649C151 631 132 617 127 598C122 581 132 559 127 540C116 488 82 407 52 357C36 330 15 313 11 289C9 277 18 264 17 248C16 224 12 204 10 184C-4 146 -4 102 12 57C49 -47 158 -128 260 -128H1183C1269 -128 1357 -62 1382 23L1657 929C1671 975 1664 1022 1639 1058ZM575 1056 596 1120C602 1138 621 1152 638 1152H1246C1264 1152 1274 1138 1268 1120L1247 1056C1241 1038 1222 1024 1205 1024H597C579 1024 569 1038 575 1056ZM492 800 513 864C519 882 538 896 555 896H1163C1181 896 1191 882 1185 864L1164 800C1158 782 1139 768 1122 768H514C496 768 486 782 492 800Z"/></svg></div><div class="cell" style="left:91.2px;width:354.8px;padding-left:10px;"><span class="t k-row" style="transform:scaleX(0.9521);transform-origin:0 50%;">JsonRecordSetWriter_WithoutSchema</span></div><div class="cell" style="left:446px;width:353px;padding-left:10px;"><span class="t k-row" style="transform:scaleX(0.9533);transform-origin:0 50%;">JsonRecordSetWriter 1.12.1</span></div><div class="cell" style="left:799px;width:354px;"></div></div>
<div class="row bgrow" style="top:465.22px;height:24.04px;"><div class="cell" style="left:0;width:91.2px;"><svg class="ic book" style="width:11.61px;height:12.50px;left:9.5px;top:4.8px;" viewBox="0 -1536 1664 1792"><path transform="scale(1,-1)" d="M1639 1058C1624 1078 1603 1092 1580 1101C1581 1083 1581 1063 1575 1044L1275 57C1264 21 1221 0 1184 0H261C206 0 137 12 117 70C109 92 110 101 118 113C127 125 143 128 156 128H1025C1152 128 1178 162 1225 316L1499 1222C1513 1269 1507 1316 1481 1352C1456 1387 1414 1408 1367 1408H606C589 1408 572 1403 555 1399L556 1402C429 1438 421 1301 379 1239C363 1216 339 1196 335 1177C332 1159 342 1142 340 1125C334 1072 294 977 270 944C255 924 233 914 226 891C220 875 230 852 228 831C223 784 188 695 161 649C151 631 132 617 127 598C122 581 132 559 127 540C116 488 82 407 52 357C36 330 15 313 11 289C9 277 18 264 17 248C16 224 12 204 10 184C-4 146 -4 102 12 57C49 -47 158 -128 260 -128H1183C1269 -128 1357 -62 1382 23L1657 929C1671 975 1664 1022 1639 1058ZM575 1056 596 1120C602 1138 621 1152 638 1152H1246C1264 1152 1274 1138 1268 1120L1247 1056C1241 1038 1222 1024 1205 1024H597C579 1024 569 1038 575 1056ZM492 800 513 864C519 882 538 896 555 896H1163C1181 896 1191 882 1185 864L1164 800C1158 782 1139 768 1122 768H514C496 768 486 782 492 800Z"/></svg></div><div class="cell" style="left:91.2px;width:354.8px;padding-left:10px;"><span class="t k-row" style="transform:scaleX(0.9521);transform-origin:0 50%;">JsonRecordSetWriter_WithoutSchema</span></div><div class="cell" style="left:446px;width:353px;padding-left:10px;"><span class="t k-row" style="transform:scaleX(0.9533);transform-origin:0 50%;">JsonRecordSetWriter 1.12.1</span></div><div class="cell" style="left:799px;width:354px;"></div></div>
<div class="row bgrow even" style="top:489.26px;height:24.04px;"><div class="cell" style="left:0;width:91.2px;"><svg class="ic book" style="width:11.61px;height:12.50px;left:9.5px;top:4.8px;" viewBox="0 -1536 1664 1792"><path transform="scale(1,-1)" d="M1639 1058C1624 1078 1603 1092 1580 1101C1581 1083 1581 1063 1575 1044L1275 57C1264 21 1221 0 1184 0H261C206 0 137 12 117 70C109 92 110 101 118 113C127 125 143 128 156 128H1025C1152 128 1178 162 1225 316L1499 1222C1513 1269 1507 1316 1481 1352C1456 1387 1414 1408 1367 1408H606C589 1408 572 1403 555 1399L556 1402C429 1438 421 1301 379 1239C363 1216 339 1196 335 1177C332 1159 342 1142 340 1125C334 1072 294 977 270 944C255 924 233 914 226 891C220 875 230 852 228 831C223 784 188 695 161 649C151 631 132 617 127 598C122 581 132 559 127 540C116 488 82 407 52 357C36 330 15 313 11 289C9 277 18 264 17 248C16 224 12 204 10 184C-4 146 -4 102 12 57C49 -47 158 -128 260 -128H1183C1269 -128 1357 -62 1382 23L1657 929C1671 975 1664 1022 1639 1058ZM575 1056 596 1120C602 1138 621 1152 638 1152H1246C1264 1152 1274 1138 1268 1120L1247 1056C1241 1038 1222 1024 1205 1024H597C579 1024 569 1038 575 1056ZM492 800 513 864C519 882 538 896 555 896H1163C1181 896 1191 882 1185 864L1164 800C1158 782 1139 768 1122 768H514C496 768 486 782 492 800Z"/></svg></div><div class="cell" style="left:91.2px;width:354.8px;padding-left:10px;"><span class="t k-row" style="transform:scaleX(0.9524);transform-origin:0 50%;">JsonRecordSetWriter_schema.name</span></div><div class="cell" style="left:446px;width:353px;padding-left:10px;"><span class="t k-row" style="transform:scaleX(0.9533);transform-origin:0 50%;">JsonRecordSetWriter 1.12.1</span></div><div class="cell" style="left:799px;width:354px;"></div></div>
<div class="row bgrow" style="top:513.30px;height:24.04px;"><div class="cell" style="left:0;width:91.2px;"><svg class="ic book" style="width:11.61px;height:12.50px;left:9.5px;top:4.8px;" viewBox="0 -1536 1664 1792"><path transform="scale(1,-1)" d="M1639 1058C1624 1078 1603 1092 1580 1101C1581 1083 1581 1063 1575 1044L1275 57C1264 21 1221 0 1184 0H261C206 0 137 12 117 70C109 92 110 101 118 113C127 125 143 128 156 128H1025C1152 128 1178 162 1225 316L1499 1222C1513 1269 1507 1316 1481 1352C1456 1387 1414 1408 1367 1408H606C589 1408 572 1403 555 1399L556 1402C429 1438 421 1301 379 1239C363 1216 339 1196 335 1177C332 1159 342 1142 340 1125C334 1072 294 977 270 944C255 924 233 914 226 891C220 875 230 852 228 831C223 784 188 695 161 649C151 631 132 617 127 598C122 581 132 559 127 540C116 488 82 407 52 357C36 330 15 313 11 289C9 277 18 264 17 248C16 224 12 204 10 184C-4 146 -4 102 12 57C49 -47 158 -128 260 -128H1183C1269 -128 1357 -62 1382 23L1657 929C1671 975 1664 1022 1639 1058ZM575 1056 596 1120C602 1138 621 1152 638 1152H1246C1264 1152 1274 1138 1268 1120L1247 1056C1241 1038 1222 1024 1205 1024H597C579 1024 569 1038 575 1056ZM492 800 513 864C519 882 538 896 555 896H1163C1181 896 1191 882 1185 864L1164 800C1158 782 1139 768 1122 768H514C496 768 486 782 492 800Z"/></svg></div><div class="cell" style="left:91.2px;width:354.8px;padding-left:10px;"><span class="t k-row" style="transform:scaleX(0.8981);transform-origin:0 50%;">JsonTreeReader_HCC_JOLTTRANSFORMRECORD</span></div><div class="cell" style="left:446px;width:353px;padding-left:10px;"><span class="t k-row" style="transform:scaleX(0.9442);transform-origin:0 50%;">JsonTreeReader 1.12.1</span></div><div class="cell" style="left:799px;width:354px;"></div></div>
<div class="row bgrow even" style="top:537.34px;height:24.04px;"><div class="cell" style="left:0;width:91.2px;"><svg class="ic book" style="width:11.61px;height:12.50px;left:9.5px;top:4.8px;" viewBox="0 -1536 1664 1792"><path transform="scale(1,-1)" d="M1639 1058C1624 1078 1603 1092 1580 1101C1581 1083 1581 1063 1575 1044L1275 57C1264 21 1221 0 1184 0H261C206 0 137 12 117 70C109 92 110 101 118 113C127 125 143 128 156 128H1025C1152 128 1178 162 1225 316L1499 1222C1513 1269 1507 1316 1481 1352C1456 1387 1414 1408 1367 1408H606C589 1408 572 1403 555 1399L556 1402C429 1438 421 1301 379 1239C363 1216 339 1196 335 1177C332 1159 342 1142 340 1125C334 1072 294 977 270 944C255 924 233 914 226 891C220 875 230 852 228 831C223 784 188 695 161 649C151 631 132 617 127 598C122 581 132 559 127 540C116 488 82 407 52 357C36 330 15 313 11 289C9 277 18 264 17 248C16 224 12 204 10 184C-4 146 -4 102 12 57C49 -47 158 -128 260 -128H1183C1269 -128 1357 -62 1382 23L1657 929C1671 975 1664 1022 1639 1058ZM575 1056 596 1120C602 1138 621 1152 638 1152H1246C1264 1152 1274 1138 1268 1120L1247 1056C1241 1038 1222 1024 1205 1024H597C579 1024 569 1038 575 1056ZM492 800 513 864C519 882 538 896 555 896H1163C1181 896 1191 882 1185 864L1164 800C1158 782 1139 768 1122 768H514C496 768 486 782 492 800Z"/></svg></div><div class="cell" style="left:91.2px;width:354.8px;padding-left:10px;"><span class="t k-row" style="transform:scaleX(0.9456);transform-origin:0 50%;">JsonTreeReader_WithoutSchema</span></div><div class="cell" style="left:446px;width:353px;padding-left:10px;"><span class="t k-row" style="transform:scaleX(0.9442);transform-origin:0 50%;">JsonTreeReader 1.12.1</span></div><div class="cell" style="left:799px;width:354px;"></div></div>
<div class="row bgrow" style="top:561.38px;height:24.04px;"><div class="cell" style="left:0;width:91.2px;"><svg class="ic book" style="width:11.61px;height:12.50px;left:9.5px;top:4.8px;" viewBox="0 -1536 1664 1792"><path transform="scale(1,-1)" d="M1639 1058C1624 1078 1603 1092 1580 1101C1581 1083 1581 1063 1575 1044L1275 57C1264 21 1221 0 1184 0H261C206 0 137 12 117 70C109 92 110 101 118 113C127 125 143 128 156 128H1025C1152 128 1178 162 1225 316L1499 1222C1513 1269 1507 1316 1481 1352C1456 1387 1414 1408 1367 1408H606C589 1408 572 1403 555 1399L556 1402C429 1438 421 1301 379 1239C363 1216 339 1196 335 1177C332 1159 342 1142 340 1125C334 1072 294 977 270 944C255 924 233 914 226 891C220 875 230 852 228 831C223 784 188 695 161 649C151 631 132 617 127 598C122 581 132 559 127 540C116 488 82 407 52 357C36 330 15 313 11 289C9 277 18 264 17 248C16 224 12 204 10 184C-4 146 -4 102 12 57C49 -47 158 -128 260 -128H1183C1269 -128 1357 -62 1382 23L1657 929C1671 975 1664 1022 1639 1058ZM575 1056 596 1120C602 1138 621 1152 638 1152H1246C1264 1152 1274 1138 1268 1120L1247 1056C1241 1038 1222 1024 1205 1024H597C579 1024 569 1038 575 1056ZM492 800 513 864C519 882 538 896 555 896H1163C1181 896 1191 882 1185 864L1164 800C1158 782 1139 768 1122 768H514C496 768 486 782 492 800Z"/></svg></div><div class="cell" style="left:91.2px;width:354.8px;padding-left:10px;"><span class="t k-row" style="transform:scaleX(0.9456);transform-origin:0 50%;">JsonTreeReader_WithoutSchema</span></div><div class="cell" style="left:446px;width:353px;padding-left:10px;"><span class="t k-row" style="transform:scaleX(0.9442);transform-origin:0 50%;">JsonTreeReader 1.12.1</span></div><div class="cell" style="left:799px;width:354px;"></div></div>
</div>
<div id="glass" class="abs"></div>
<div id="dialog" class="abs">
<div id="dhead" class="abs"></div><div id="dtitle" class="abs"><span class="t" style="transform:scaleX(0.7939);transform-origin:0 50%;-webkit-text-stroke:0.45px #fff;">Controller Service Details</span></div>
<div class="tabs dlt" style="left:19.4px;top:76.6px;width:762px;"><div class="tab un" style="left:0;width:110.6px;"><span class="t k-tab" style="transform:scaleX(0.9052);transform-origin:50% 50%;">SETTINGS</span></div><div class="tab sel" style="left:112.5px;width:110.6px;"><span class="t k-tab" style="transform:scaleX(0.8801);transform-origin:50% 50%;">PROPERTIES</span></div><div class="tab un" style="left:225.0px;width:110.6px;"><span class="t k-tab" style="transform:scaleX(0.9290);transform-origin:50% 50%;">COMMENTS</span></div></div>
<div class="abs b" style="left:25.9px;top:127px;line-height:1;white-space:nowrap;"><span class="t k-req" style="transform:scaleX(0.9043);transform-origin:0 50%;">Required field</span></div>
<div class="grid" style="left:19.8px;top:152px;width:761.6px;height:357px;">
<div class="ghead"><div class="hc" style="left:4.5px;"><span class="t k-head" style="transform:scaleX(0.9070);transform-origin:0 50%;">Property</span></div><div class="hc" style="left:335.5px;"><span class="t k-head" style="transform:scaleX(0.9196);transform-origin:0 50%;">Value</span></div></div>
<div class="row" style="top:32.00px;height:24.03px;width:745.1px;right:auto;"><div class="cell b" style="left:0;width:331.7px;padding-left:10.2px;"><span class="t k-rowb" style="transform:scaleX(0.9063);transform-origin:0 50%;">Schema Access Strategy</span><svg class="ic q" style="width:10.80px;height:12.60px;left:312.9px;top:5.1px;" viewBox="0 -1536 1536 1792"><path transform="scale(1,-1)" d="M896 160C896 142 882 128 864 128H672C654 128 640 142 640 160V352C640 370 654 384 672 384H864C882 384 896 370 896 352V160ZM1152 832C1152 680 1048 622 972 579C925 552 896 503 896 480C896 462 882 448 864 448H672C654 448 640 462 640 480V516C640 613 737 696 808 728C869 756 896 782 896 834C896 878 837 919 773 919C737 919 704 907 687 895C668 881 648 863 601 803C595 795 585 791 576 791C569 791 562 793 557 797L425 897C412 907 408 925 417 939C503 1082 625 1152 788 1152C960 1152 1152 1015 1152 832ZM1536 640C1536 1064 1192 1408 768 1408C344 1408 0 1064 0 640C0 216 344 -128 768 -128C1192 -128 1536 216 1536 640Z"/></svg></div><div class="cell b" style="left:331.7px;width:331.09999999999997px;padding-left:10.2px;"><span class="t k-rowb" style="transform:scaleX(0.9005);transform-origin:0 50%;">Use 'Schema Name' Property</span></div><div class="cell" style="left:662.8px;width:82.30000000000007px;border-right:none;"></div></div>
<div class="row even" style="top:56.03px;height:24.03px;width:745.1px;right:auto;"><div class="cell" style="left:0;width:331.7px;padding-left:10.2px;"><span class="t k-row" style="transform:scaleX(0.9423);transform-origin:0 50%;">Schema Registry</span><svg class="ic q" style="width:10.80px;height:12.60px;left:312.9px;top:5.1px;" viewBox="0 -1536 1536 1792"><path transform="scale(1,-1)" d="M896 160C896 142 882 128 864 128H672C654 128 640 142 640 160V352C640 370 654 384 672 384H864C882 384 896 370 896 352V160ZM1152 832C1152 680 1048 622 972 579C925 552 896 503 896 480C896 462 882 448 864 448H672C654 448 640 462 640 480V516C640 613 737 696 808 728C869 756 896 782 896 834C896 878 837 919 773 919C737 919 704 907 687 895C668 881 648 863 601 803C595 795 585 791 576 791C569 791 562 793 557 797L425 897C412 907 408 925 417 939C503 1082 625 1152 788 1152C960 1152 1152 1015 1152 832ZM1536 640C1536 1064 1192 1408 768 1408C344 1408 0 1064 0 640C0 216 344 -128 768 -128C1192 -128 1536 216 1536 640Z"/></svg></div><div class="cell" style="left:331.7px;width:331.09999999999997px;padding-left:10.2px;"><span class="t k-row" style="transform:scaleX(0.9477);transform-origin:0 50%;">AvroSchemaRegistry</span></div><div class="cell" style="left:662.8px;width:82.30000000000007px;border-right:none;"><svg class="ic arr" style="width:12.00px;height:12.00px;left:10px;top:4.5px;" viewBox="0 -1536 1792 1792"><path transform="scale(1,-1)" d="M1728 643C1728 652 1724 660 1718 666L1334 1016C1324 1024 1311 1026 1299 1021C1287 1016 1280 1005 1280 992V768H32C14 768 0 754 0 736V544C0 526 14 512 32 512H1280V288C1280 275 1288 264 1299 259C1311 254 1324 256 1334 265L1718 619C1724 625 1728 634 1728 643Z"/></svg></div></div>
<div class="row" style="top:80.06px;height:24.03px;width:745.1px;right:auto;"><div class="cell" style="left:0;width:331.7px;padding-left:10.2px;"><span class="t k-row" style="transform:scaleX(0.9481);transform-origin:0 50%;">Schema Name</span><svg class="ic q" style="width:10.80px;height:12.60px;left:312.9px;top:5.1px;" viewBox="0 -1536 1536 1792"><path transform="scale(1,-1)" d="M896 160C896 142 882 128 864 128H672C654 128 640 142 640 160V352C640 370 654 384 672 384H864C882 384 896 370 896 352V160ZM1152 832C1152 680 1048 622 972 579C925 552 896 503 896 480C896 462 882 448 864 448H672C654 448 640 462 640 480V516C640 613 737 696 808 728C869 756 896 782 896 834C896 878 837 919 773 919C737 919 704 907 687 895C668 881 648 863 601 803C595 795 585 791 576 791C569 791 562 793 557 797L425 897C412 907 408 925 417 939C503 1082 625 1152 788 1152C960 1152 1152 1015 1152 832ZM1536 640C1536 1064 1192 1408 768 1408C344 1408 0 1064 0 640C0 216 344 -128 768 -128C1192 -128 1536 216 1536 640Z"/></svg></div><div class="cell" style="left:331.7px;width:331.09999999999997px;padding-left:10.2px;"><span class="t k-row" style="transform:scaleX(0.9654);transform-origin:0 50%;">${schema.name}</span></div><div class="cell" style="left:662.8px;width:82.30000000000007px;border-right:none;"></div></div>
<div class="row even" style="top:104.09px;height:24.03px;width:745.1px;right:auto;"><div class="cell" style="left:0;width:331.7px;padding-left:10.2px;"><span class="t k-row" style="transform:scaleX(0.9493);transform-origin:0 50%;">Schema Version</span><svg class="ic q" style="width:10.80px;height:12.60px;left:312.9px;top:5.1px;" viewBox="0 -1536 1536 1792"><path transform="scale(1,-1)" d="M896 160C896 142 882 128 864 128H672C654 128 640 142 640 160V352C640 370 654 384 672 384H864C882 384 896 370 896 352V160ZM1152 832C1152 680 1048 622 972 579C925 552 896 503 896 480C896 462 882 448 864 448H672C654 448 640 462 640 480V516C640 613 737 696 808 728C869 756 896 782 896 834C896 878 837 919 773 919C737 919 704 907 687 895C668 881 648 863 601 803C595 795 585 791 576 791C569 791 562 793 557 797L425 897C412 907 408 925 417 939C503 1082 625 1152 788 1152C960 1152 1152 1015 1152 832ZM1536 640C1536 1064 1192 1408 768 1408C344 1408 0 1064 0 640C0 216 344 -128 768 -128C1192 -128 1536 216 1536 640Z"/></svg></div><div class="cell unset" style="left:331.7px;width:331.09999999999997px;padding-left:10.2px;"><span class="t k-row" style="transform:scaleX(0.9510);transform-origin:0 50%;">No value set</span></div><div class="cell" style="left:662.8px;width:82.30000000000007px;border-right:none;"></div></div>
<div class="row" style="top:128.12px;height:24.03px;width:745.1px;right:auto;"><div class="cell" style="left:0;width:331.7px;padding-left:10.2px;"><span class="t k-row" style="transform:scaleX(0.9445);transform-origin:0 50%;">Schema Branch</span><svg class="ic q" style="width:10.80px;height:12.60px;left:312.9px;top:5.1px;" viewBox="0 -1536 1536 1792"><path transform="scale(1,-1)" d="M896 160C896 142 882 128 864 128H672C654 128 640 142 640 160V352C640 370 654 384 672 384H864C882 384 896 370 896 352V160ZM1152 832C1152 680 1048 622 972 579C925 552 896 503 896 480C896 462 882 448 864 448H672C654 448 640 462 640 480V516C640 613 737 696 808 728C869 756 896 782 896 834C896 878 837 919 773 919C737 919 704 907 687 895C668 881 648 863 601 803C595 795 585 791 576 791C569 791 562 793 557 797L425 897C412 907 408 925 417 939C503 1082 625 1152 788 1152C960 1152 1152 1015 1152 832ZM1536 640C1536 1064 1192 1408 768 1408C344 1408 0 1064 0 640C0 216 344 -128 768 -128C1192 -128 1536 216 1536 640Z"/></svg></div><div class="cell unset" style="left:331.7px;width:331.09999999999997px;padding-left:10.2px;"><span class="t k-row" style="transform:scaleX(0.9510);transform-origin:0 50%;">No value set</span></div><div class="cell" style="left:662.8px;width:82.30000000000007px;border-right:none;"></div></div>
<div class="row even" style="top:152.15px;height:24.03px;width:745.1px;right:auto;"><div class="cell" style="left:0;width:331.7px;padding-left:10.2px;"><span class="t k-row" style="transform:scaleX(0.9480);transform-origin:0 50%;">Schema Text</span><svg class="ic q" style="width:10.80px;height:12.60px;left:312.9px;top:5.1px;" viewBox="0 -1536 1536 1792"><path transform="scale(1,-1)" d="M896 160C896 142 882 128 864 128H672C654 128 640 142 640 160V352C640 370 654 384 672 384H864C882 384 896 370 896 352V160ZM1152 832C1152 680 1048 622 972 579C925 552 896 503 896 480C896 462 882 448 864 448H672C654 448 640 462 640 480V516C640 613 737 696 808 728C869 756 896 782 896 834C896 878 837 919 773 919C737 919 704 907 687 895C668 881 648 863 601 803C595 795 585 791 576 791C569 791 562 793 557 797L425 897C412 907 408 925 417 939C503 1082 625 1152 788 1152C960 1152 1152 1015 1152 832ZM1536 640C1536 1064 1192 1408 768 1408C344 1408 0 1064 0 640C0 216 344 -128 768 -128C1192 -128 1536 216 1536 640Z"/></svg></div><div class="cell" style="left:331.7px;width:331.09999999999997px;padding-left:10.2px;"><span class="t k-row" style="transform:scaleX(0.9645);transform-origin:0 50%;">${avro.schema}</span></div><div class="cell" style="left:662.8px;width:82.30000000000007px;border-right:none;"></div></div>
<div class="row" style="top:176.18px;height:24.03px;width:745.1px;right:auto;"><div class="cell b" style="left:0;width:331.7px;padding-left:10.2px;"><span class="t k-rowb" style="transform:scaleX(0.9057);transform-origin:0 50%;">CSV Parser</span><svg class="ic q" style="width:10.80px;height:12.60px;left:312.9px;top:5.1px;" viewBox="0 -1536 1536 1792"><path transform="scale(1,-1)" d="M896 160C896 142 882 128 864 128H672C654 128 640 142 640 160V352C640 370 654 384 672 384H864C882 384 896 370 896 352V160ZM1152 832C1152 680 1048 622 972 579C925 552 896 503 896 480C896 462 882 448 864 448H672C654 448 640 462 640 480V516C640 613 737 696 808 728C869 756 896 782 896 834C896 878 837 919 773 919C737 919 704 907 687 895C668 881 648 863 601 803C595 795 585 791 576 791C569 791 562 793 557 797L425 897C412 907 408 925 417 939C503 1082 625 1152 788 1152C960 1152 1152 1015 1152 832ZM1536 640C1536 1064 1192 1408 768 1408C344 1408 0 1064 0 640C0 216 344 -128 768 -128C1192 -128 1536 216 1536 640Z"/></svg></div><div class="cell b" style="left:331.7px;width:331.09999999999997px;padding-left:10.2px;"><span class="t k-rowb" style="transform:scaleX(0.8991);transform-origin:0 50%;">Apache Commons CSV</span></div><div class="cell" style="left:662.8px;width:82.30000000000007px;border-right:none;"></div></div>
<div class="row even" style="top:200.21px;height:24.03px;width:745.1px;right:auto;"><div class="cell" style="left:0;width:331.7px;padding-left:10.2px;"><span class="t k-row" style="transform:scaleX(0.9528);transform-origin:0 50%;">Date Format</span><svg class="ic q" style="width:10.80px;height:12.60px;left:312.9px;top:5.1px;" viewBox="0 -1536 1536 1792"><path transform="scale(1,-1)" d="M896 160C896 142 882 128 864 128H672C654 128 640 142 640 160V352C640 370 654 384 672 384H864C882 384 896 370 896 352V160ZM1152 832C1152 680 1048 622 972 579C925 552 896 503 896 480C896 462 882 448 864 448H672C654 448 640 462 640 480V516C640 613 737 696 808 728C869 756 896 782 896 834C896 878 837 919 773 919C737 919 704 907 687 895C668 881 648 863 601 803C595 795 585 791 576 791C569 791 562 793 557 797L425 897C412 907 408 925 417 939C503 1082 625 1152 788 1152C960 1152 1152 1015 1152 832ZM1536 640C1536 1064 1192 1408 768 1408C344 1408 0 1064 0 640C0 216 344 -128 768 -128C1192 -128 1536 216 1536 640Z"/></svg></div><div class="cell unset" style="left:331.7px;width:331.09999999999997px;padding-left:10.2px;"><span class="t k-row" style="transform:scaleX(0.9510);transform-origin:0 50%;">No value set</span></div><div class="cell" style="left:662.8px;width:82.30000000000007px;border-right:none;"></div></div>
<div class="row hov" style="top:224.24px;height:24.03px;width:745.1px;right:auto;"><div class="cell" style="left:0;width:331.7px;padding-left:10.2px;"><span class="t k-row" style="transform:scaleX(0.9665);transform-origin:0 50%;">Time Format</span><svg class="ic q" style="width:10.80px;height:12.60px;left:312.9px;top:5.1px;" viewBox="0 -1536 1536 1792"><path transform="scale(1,-1)" d="M896 160C896 142 882 128 864 128H672C654 128 640 142 640 160V352C640 370 654 384 672 384H864C882 384 896 370 896 352V160ZM1152 832C1152 680 1048 622 972 579C925 552 896 503 896 480C896 462 882 448 864 448H672C654 448 640 462 640 480V516C640 613 737 696 808 728C869 756 896 782 896 834C896 878 837 919 773 919C737 919 704 907 687 895C668 881 648 863 601 803C595 795 585 791 576 791C569 791 562 793 557 797L425 897C412 907 408 925 417 939C503 1082 625 1152 788 1152C960 1152 1152 1015 1152 832ZM1536 640C1536 1064 1192 1408 768 1408C344 1408 0 1064 0 640C0 216 344 -128 768 -128C1192 -128 1536 216 1536 640Z"/></svg></div><div class="cell unset" style="left:331.7px;width:331.09999999999997px;padding-left:10.2px;"><span class="t k-row" style="transform:scaleX(0.9510);transform-origin:0 50%;">No value set</span></div><div class="cell" style="left:662.8px;width:82.30000000000007px;border-right:none;"></div></div>
<div class="row even" style="top:248.27px;height:24.03px;width:745.1px;right:auto;"><div class="cell" style="left:0;width:331.7px;padding-left:10.2px;"><span class="t k-row" style="transform:scaleX(0.9761);transform-origin:0 50%;">Timestamp Format</span><svg class="ic q" style="width:10.80px;height:12.60px;left:312.9px;top:5.1px;" viewBox="0 -1536 1536 1792"><path transform="scale(1,-1)" d="M896 160C896 142 882 128 864 128H672C654 128 640 142 640 160V352C640 370 654 384 672 384H864C882 384 896 370 896 352V160ZM1152 832C1152 680 1048 622 972 579C925 552 896 503 896 480C896 462 882 448 864 448H672C654 448 640 462 640 480V516C640 613 737 696 808 728C869 756 896 782 896 834C896 878 837 919 773 919C737 919 704 907 687 895C668 881 648 863 601 803C595 795 585 791 576 791C569 791 562 793 557 797L425 897C412 907 408 925 417 939C503 1082 625 1152 788 1152C960 1152 1152 1015 1152 832ZM1536 640C1536 1064 1192 1408 768 1408C344 1408 0 1064 0 640C0 216 344 -128 768 -128C1192 -128 1536 216 1536 640Z"/></svg></div><div class="cell unset" style="left:331.7px;width:331.09999999999997px;padding-left:10.2px;"><span class="t k-row" style="transform:scaleX(0.9510);transform-origin:0 50%;">No value set</span></div><div class="cell" style="left:662.8px;width:82.30000000000007px;border-right:none;"></div></div>
<div class="row" style="top:272.30px;height:24.03px;width:745.1px;right:auto;"><div class="cell b" style="left:0;width:331.7px;padding-left:10.2px;"><span class="t k-rowb" style="transform:scaleX(0.9043);transform-origin:0 50%;">CSV Format</span><svg class="ic q" style="width:10.80px;height:12.60px;left:312.9px;top:5.1px;" viewBox="0 -1536 1536 1792"><path transform="scale(1,-1)" d="M896 160C896 142 882 128 864 128H672C654 128 640 142 640 160V352C640 370 654 384 672 384H864C882 384 896 370 896 352V160ZM1152 832C1152 680 1048 622 972 579C925 552 896 503 896 480C896 462 882 448 864 448H672C654 448 640 462 640 480V516C640 613 737 696 808 728C869 756 896 782 896 834C896 878 837 919 773 919C737 919 704 907 687 895C668 881 648 863 601 803C595 795 585 791 576 791C569 791 562 793 557 797L425 897C412 907 408 925 417 939C503 1082 625 1152 788 1152C960 1152 1152 1015 1152 832ZM1536 640C1536 1064 1192 1408 768 1408C344 1408 0 1064 0 640C0 216 344 -128 768 -128C1192 -128 1536 216 1536 640Z"/></svg></div><div class="cell b" style="left:331.7px;width:331.09999999999997px;padding-left:10.2px;"><span class="t k-rowb" style="transform:scaleX(0.9051);transform-origin:0 50%;">Custom Format</span></div><div class="cell" style="left:662.8px;width:82.30000000000007px;border-right:none;"></div></div>
<div class="row even" style="top:296.33px;height:24.03px;width:745.1px;right:auto;"><div class="cell b" style="left:0;width:331.7px;padding-left:10.2px;"><span class="t k-rowb" style="transform:scaleX(0.9114);transform-origin:0 50%;">Value Separator</span><svg class="ic q" style="width:10.80px;height:12.60px;left:312.9px;top:5.1px;" viewBox="0 -1536 1536 1792"><path transform="scale(1,-1)" d="M896 160C896 142 882 128 864 128H672C654 128 640 142 640 160V352C640 370 654 384 672 384H864C882 384 896 370 896 352V160ZM1152 832C1152 680 1048 622 972 579C925 552 896 503 896 480C896 462 882 448 864 448H672C654 448 640 462 640 480V516C640 613 737 696 808 728C869 756 896 782 896 834C896 878 837 919 773 919C737 919 704 907 687 895C668 881 648 863 601 803C595 795 585 791 576 791C569 791 562 793 557 797L425 897C412 907 408 925 417 939C503 1082 625 1152 788 1152C960 1152 1152 1015 1152 832ZM1536 640C1536 1064 1192 1408 768 1408C344 1408 0 1064 0 640C0 216 344 -128 768 -128C1192 -128 1536 216 1536 640Z"/></svg></div><div class="cell b" style="left:331.7px;width:331.09999999999997px;padding-left:10.2px;"><span class="t k-rowb" style="transform:scaleX(0.7559);transform-origin:0 50%;">;</span></div><div class="cell" style="left:662.8px;width:82.30000000000007px;border-right:none;"></div></div>
<div class="row" style="top:320.36px;height:24.03px;width:745.1px;right:auto;"><div class="cell b" style="left:0;width:331.7px;padding-left:10.2px;"><span class="t k-rowb" style="transform:scaleX(0.9002);transform-origin:0 50%;">Record Separator</span><svg class="ic q" style="width:10.80px;height:12.60px;left:312.9px;top:5.1px;" viewBox="0 -1536 1536 1792"><path transform="scale(1,-1)" d="M896 160C896 142 882 128 864 128H672C654 128 640 142 640 160V352C640 370 654 384 672 384H864C882 384 896 370 896 352V160ZM1152 832C1152 680 1048 622 972 579C925 552 896 503 896 480C896 462 882 448 864 448H672C654 448 640 462 640 480V516C640 613 737 696 808 728C869 756 896 782 896 834C896 878 837 919 773 919C737 919 704 907 687 895C668 881 648 863 601 803C595 795 585 791 576 791C569 791 562 793 557 797L425 897C412 907 408 925 417 939C503 1082 625 1152 788 1152C960 1152 1152 1015 1152 832ZM1536 640C1536 1064 1192 1408 768 1408C344 1408 0 1064 0 640C0 216 344 -128 768 -128C1192 -128 1536 216 1536 640Z"/></svg></div><div class="cell b" style="left:331.7px;width:331.09999999999997px;padding-left:10.2px;"><span class="t k-rowb" style="transform:scaleX(1.0613);transform-origin:0 50%;">\n</span></div><div class="cell" style="left:662.8px;width:82.30000000000007px;border-right:none;"></div></div>
<div class="row even" style="top:344.39px;height:24.03px;width:745.1px;right:auto;"><div class="cell b" style="left:0;width:331.7px;padding-left:10.2px;"><span class="t k-rowb" style="transform:scaleX(0.9096);transform-origin:0 50%;">Treat First Line as Header</span><svg class="ic q" style="width:10.80px;height:12.60px;left:312.9px;top:5.1px;" viewBox="0 -1536 1536 1792"><path transform="scale(1,-1)" d="M896 160C896 142 882 128 864 128H672C654 128 640 142 640 160V352C640 370 654 384 672 384H864C882 384 896 370 896 352V160ZM1152 832C1152 680 1048 622 972 579C925 552 896 503 896 480C896 462 882 448 864 448H672C654 448 640 462 640 480V516C640 613 737 696 808 728C869 756 896 782 896 834C896 878 837 919 773 919C737 919 704 907 687 895C668 881 648 863 601 803C595 795 585 791 576 791C569 791 562 793 557 797L425 897C412 907 408 925 417 939C503 1082 625 1152 788 1152C960 1152 1152 1015 1152 832ZM1536 640C1536 1064 1192 1408 768 1408C344 1408 0 1064 0 640C0 216 344 -128 768 -128C1192 -128 1536 216 1536 640Z"/></svg></div><div class="cell b" style="left:331.7px;width:331.09999999999997px;padding-left:10.2px;"><span class="t k-rowb" style="transform:scaleX(0.9166);transform-origin:0 50%;">true</span></div><div class="cell" style="left:662.8px;width:82.30000000000007px;border-right:none;"></div></div>
<div class="abs" style="left:745.1px;top:32px;width:16.5px;bottom:0;background:#f1f1f1;"><div class="abs" style="left:4.0px;top:7px;width:0;height:0;border-left:4.3px solid transparent;border-right:4.3px solid transparent;border-bottom:5px solid #a3a3a3;"></div><div class="abs" style="left:2px;right:2px;top:17px;height:188px;background:#c1c1c1;"></div><div class="abs" style="left:4.0px;bottom:6.6px;width:0;height:0;border-left:4.3px solid transparent;border-right:4.3px solid transparent;border-top:5px solid #505050;"></div></div>
</div>
</div>
<div id="ok" class="abs" style="left:1294.7px;top:701px;width:105.3px;"><span class="t k-ok" style="transform:scaleX(0.8572);transform-origin:50% 50%;">OK</span></div>
<div class="green" style="left:3.92px;top:2.80px;width:218.41px;height:42.60px;"></div>
<div class="green" style="left:123.88px;top:72.82px;width:139.86px;height:40.07px;"></div>
<div class="green" style="left:101.60px;top:211.47px;width:149.35px;height:26.68px;"></div>
<div class="green" style="left:456.72px;top:211.99px;width:117.44px;height:27.45px;"></div>
<div class="green" style="left:947.21px;top:347.55px;width:190.03px;height:85.07px;"></div>
</div></body></html>
